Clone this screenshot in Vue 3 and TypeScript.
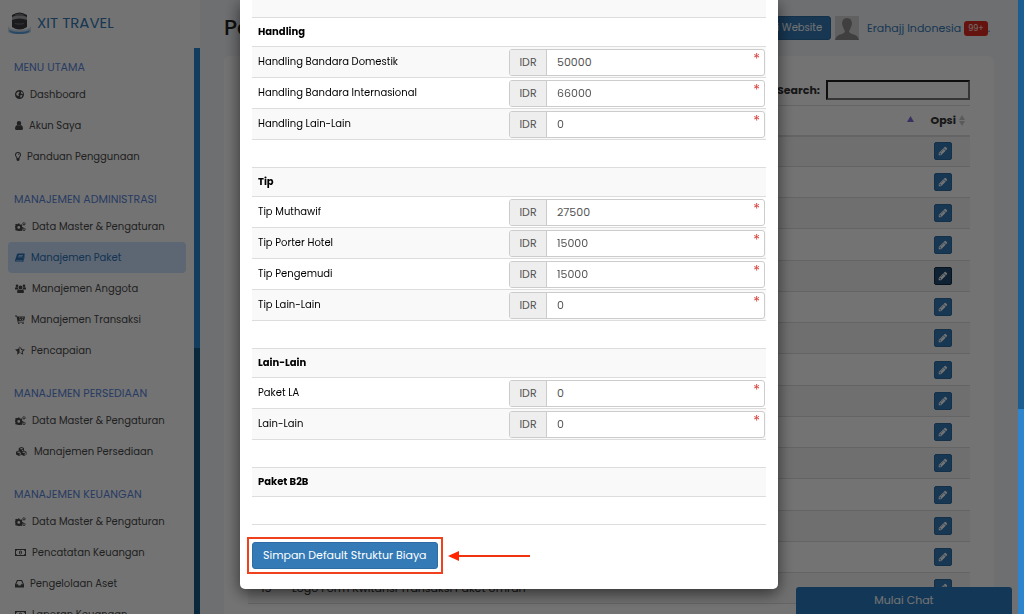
<script setup lang="ts">
import { ref } from 'vue'

interface MenuItem { icon: string; label: string; active?: boolean }
interface MenuGroup { title: string; items: MenuItem[] }
interface CostItem { id: string; label: string; value: string }
interface CostGroup { title: string; items: CostItem[] }

const menu: MenuGroup[] = [
  { title: 'MENU UTAMA', items: [
    { icon: 'globe', label: 'Dashboard' },
    { icon: 'user', label: 'Akun Saya' },
    { icon: 'bulb', label: 'Panduan Penggunaan' },
  ] },
  { title: 'MANAJEMEN ADMINISTRASI', items: [
    { icon: 'cogs', label: 'Data Master & Pengaturan' },
    { icon: 'book', label: 'Manajemen Paket', active: true },
    { icon: 'users', label: 'Manajemen Anggota' },
    { icon: 'cart', label: 'Manajemen Transaksi' },
    { icon: 'star', label: 'Pencapaian' },
  ] },
  { title: 'MANAJEMEN PERSEDIAAN', items: [
    { icon: 'cogs', label: 'Data Master & Pengaturan' },
    { icon: 'cubes', label: 'Manajemen Persediaan' },
  ] },
  { title: 'MANAJEMEN KEUANGAN', items: [
    { icon: 'cogs', label: 'Data Master & Pengaturan' },
    { icon: 'money', label: 'Pencatatan Keuangan' },
    { icon: 'inbox', label: 'Pengelolaan Aset' },
    { icon: 'money', label: 'Laporan Keuangan' },
  ] },
]

const icons: Record<string, { w: number; d: string }> = {
  globe: { w: 9, d: 'M9 0a9 9 0 1 0 0 18A9 9 0 0 0 9 0zM3 6l4-3 2 1-1 3-2 1 2 2-1 2-3-1-1.500-2zM12 3l2.500 1.500 1.500 3-1.500 1-2.500-2zM11 10l4 .5-2 4-2.500.500z' },
  user: { w: 8, d: 'M8 0a4.500 4.500 0 0 1 0 9A4.500 4.500 0 0 1 8 0zM4 8q4 3 8 0 4 1 4 7 0 3-3 3H3q-3 0-3-3 0-6 4-7z' },
  bulb: { w: 6, d: 'M6 0a6 6 0 0 1 6 6c0 3-3 4-3 7v3l-2 2H5l-2-2v-3C3 10 0 9 0 6a6 6 0 0 1 6-6zM6 2a4 4 0 0 0-4 4c0 2 2 3 3 6h2c1-3 3-4 3-6a4 4 0 0 0-4-4zM6 3.500q2.500 0 2.500 2.500h-1Q7.500 4.500 6 4.500z' },
  cogs: { w: 11, d: 'M6 3h3l.5 2 1.500.7 1.800-1 2 2-1 1.800.7 1.500 2 .5v2l-2 .5-.7 1.500 1 1.800-2 2-1.800-1-1.500.7-.5 2H6l-.5-2L4 16.300l-1.800 1-2-2 1-1.800L.5 12l-.5-2 .5-2 .7-.5-1-1.800 2-2 1.800 1L5.500 4zM7.500 8a2.800 2.800 0 1 0 0 5.600 2.800 2.800 0 0 0 0-5.600zM18 0l1 1.500 2 .3V4l-1 2-2 1-2-1-1-1.500V2l1.500-.5zM18 2.200a1.500 1.500 0 1 0 0 3 1.500 1.500 0 0 0 0-3zM18 11l1 1.500 2 .3V15l-1 2-2 1-2-1-1-1.500V13l1.500-.5zM18 13.200a1.500 1.500 0 1 0 0 3 1.500 1.500 0 0 0 0-3z' },
  book: { w: 10, d: 'M6 1h12q2 0 1.500 2l-3 10q-.5 2-2 2H3q-1.500 0-1.500 1T3 17h12l3-10h1.500l-3 10.500Q16 18 15 18H3q-3 0-3-3L4 2.500Q4.500 1 6 1zM7.500 4L7 5.500h8.500L16 4zM6.500 7L6 8.500h8.500L15 7z' },
  users: { w: 11, d: 'M11 3a4 4 0 1 1 0 8 4 4 0 0 1 0-8zM4 1a2.700 2.700 0 1 1 0 5.400A2.700 2.700 0 0 1 4 1zM18 1a2.700 2.700 0 1 1 0 5.400A2.700 2.700 0 0 1 18 1zM0 11V7.500l2-1 4 .5q0 3 1 4zM22 11V7.500l-2-1-4 .5q0 3-1 4zM8 11q3 2 6 0l3 1 1 4q0 2-2 2H6q-2 0-2-2l1-4z' },
  cart: { w: 10, d: 'M0 1h4l.5 2H20l-1.500 8L6.500 12l.5 1.500h11V15H5.500L3 3H0zM8 5v1.500h3V5zM13 5v1.500h4V5zM9 8v1.500h3V8zM14 8v1.500h2V8zM7.500 15.500a1.500 1.500 0 1 1 0 3 1.500 1.500 0 0 1 0-3zM16 15.500a1.500 1.500 0 1 1 0 3 1.500 1.500 0 0 1 0-3z' },
  star: { w: 10, d: 'M9 0v14l-5 3.500 1-6L0 7l6.500-1zM11 1l3 5.500 6 .5-4.500 4.500 1 6L11 14.500v-2l3.500 2-1-4L16 8.500l-3.500-.5L11 5z' },
  cubes: { w: 13, d: 'M13 0l5 2v5l5 2.500V15l-5 3-5-2.500L8 18l-6-3V9.500L7.500 7V2zM13 2L9.500 3.500 13 5l3.500-1.500zM8 9l-4 1.500L8 12l4-1.500zM18 9l-4 1.500 4 1.500 4-1.500zM9 13.500V16l3-1.500V12zM19 13.500V16l3-1.500V12zM14 6.500V8.500l2.500-1.200V5.300z' },
  money: { w: 11, d: 'M0 2h22v14H0zM2 6v6q2 0 2 2h14q0-2 2-2V6q-2 0-2-2H4q0 2-2 2zM11 5q3 0 3 4t-3 4-3-4 3-4zM10 7v1h.5v2.500H10v1h2.500v-1H12V7z' },
  inbox: { w: 9, d: 'M4 2h10l4 9v6H0v-6zM5.500 4L2.500 10.500H6L7 13h4l1-2.500h3.500L12.500 4z' },
}

const groups = ref<CostGroup[]>([
  { title: 'Handling', items: [
    { id: 'handling-domestik', label: 'Handling Bandara Domestik', value: '50000' },
    { id: 'handling-internasional', label: 'Handling Bandara Internasional', value: '66000' },
    { id: 'handling-lain', label: 'Handling Lain-Lain', value: '0' },
  ] },
  { title: 'Tip', items: [
    { id: 'tip-muthawif', label: 'Tip Muthawif', value: '27500' },
    { id: 'tip-porter', label: 'Tip Porter Hotel', value: '15000' },
    { id: 'tip-pengemudi', label: 'Tip Pengemudi', value: '15000' },
    { id: 'tip-lain', label: 'Tip Lain-Lain', value: '0' },
  ] },
  { title: 'Lain-Lain', items: [
    { id: 'paket-la', label: 'Paket LA', value: '0' },
    { id: 'lain-lain', label: 'Lain-Lain', value: '0' },
  ] },
  { title: 'Paket B2B', items: [] },
])

const rows = Array.from({ length: 16 }, (_, i) => ({
  no: i + 1,
  name: i === 14 ? 'Logo Form Kwitansi Transaksi Paket Umrah' : '',
}))
const search = ref('')
</script>

<template>
  <div class="page">
    <aside class="sidebar">
      <a class="brand" href="#">
        <svg width="23" height="22" viewBox="0 0 23 22" aria-hidden="true">
          <path d="M0 14q1 4 11.500 4T23 14v6q-2 2-11.500 2T0 20z" fill="#c9dcf0" />
          <path d="M1 18q4 2 10.500 2T22 18l-1 2q-3 2-9.500 2T2 20z" fill="#5aa3e0" />
          <path d="M4 3q7.500-5 15 0v12q-7.500 5-15 0z" fill="#3c3c42" />
          <path d="M4 5q7.500-4 15 0v3q-7.500-3-15 0z" fill="#a9a9ae" />
          <path d="M6 3q5.500-3 11 0-5.500 2-11 0z" fill="#77777c" />
          <path d="M7 11q4.500 1 9 0v1q-4.500 1-9 0z" fill="#77777c" />
        </svg>
        <span>XIT TRAVEL</span>
      </a>
      <div class="menu-area">
        <nav class="menu">
          <section v-for="group in menu" :key="group.title" class="menu-group">
            <h2>{{ group.title }}</h2>
            <a v-for="item in group.items" :key="item.label" href="#" class="menu-item" :class="{ active: item.active }">
              <svg :width="icons[item.icon].w" height="9" :viewBox="`0 0 ${icons[item.icon].w * 2} 18`" aria-hidden="true">
                <path :d="icons[item.icon].d" fill="currentColor" fill-rule="evenodd" />
              </svg>
              <span>{{ item.label }}</span>
            </a>
          </section>
        </nav>
        <div class="side-scroll"><div class="side-thumb"></div></div>
      </div>
    </aside>

    <main class="main">
      <header class="topbar">
        <h1>Pe</h1>
        <div class="account">
          <button type="button" class="site-btn">Kunjungi Website</button>
          <svg class="avatar" width="24" height="24" viewBox="0 0 24 24" aria-hidden="true">
            <rect width="24" height="24" fill="#d6d6d6" />
            <path d="M12 2q5 0 5 6l-1 3q-1 3-2 4 0 2 3 3 6 1 7 6H0q1-5 7-6 3-1 3-3-1-1-2-4L7 8q0-6 5-6z" fill="#8c8c8c" />
          </svg>
          <a href="#" class="name">Erahajj Indonesia</a>
          <span class="badge">99+</span><span class="dot">.</span>
        </div>
      </header>
      <section class="card">
        <div class="search">
          <label for="search">Search:</label>
          <input id="search" v-model="search" type="text">
        </div>
        <table class="list">
          <thead>
            <tr>
              <th class="no"></th>
              <th class="sorted"><svg width="7" height="6" viewBox="0 0 7 6" aria-hidden="true"><path d="M3.500 0L7 6H0z" fill="#7a70d8" /></svg></th>
              <th class="opt">
                <div class="sortable">
                  Opsi
                  <svg width="6" height="11" viewBox="0 0 6 11" aria-hidden="true"><path d="M3 0l3 5H0zM3 11L0 6h6z" fill="#c8c8c8" /></svg>
                </div>
              </th>
            </tr>
          </thead>
          <tbody>
            <tr v-for="row in rows" :key="row.no">
              <td class="no">{{ row.no === 15 ? row.no : '' }}</td>
              <td>{{ row.name }}</td>
              <td class="opt">
                <button type="button" class="edit" :class="{ pressed: row.no === 5 }" aria-label="Edit">
                  <svg width="10" height="10" viewBox="0 0 1792 1792" aria-hidden="true">
                    <path d="M491 1536l91-91-235-235-91 91v107h128v128h107zm523-928q0-22-22-22-10 0-17 7l-542 542q-7 7-7 17 0 22 22 22 10 0 17-7l542-542q7-7 7-17zm-54-192l416 416-832 832h-416v-416zm683 96q0 53-37 90l-166 166-416-416 166-165q36-38 90-38 53 0 91 38l235 234q37 39 37 91z" fill="currentColor" />
                  </svg>
                </button>
              </td>
            </tr>
          </tbody>
        </table>
      </section>
    </main>

    <button type="button" class="chat">Mulai Chat</button>
    <div class="backdrop"></div>
    <div class="page-scroll"><div class="page-thumb"></div></div>

    <div class="modal" role="dialog" aria-label="Struktur Biaya">
      <table class="costs">
        <tbody>
          <tr class="lead"><td colspan="2"></td></tr>
          <template v-for="group in groups" :key="group.title">
            <tr class="heading"><th colspan="2">{{ group.title }}</th></tr>
            <tr v-for="item in group.items" :key="item.id" class="entry">
              <td><label :for="item.id">{{ item.label }}</label></td>
              <td class="field">
                <div class="money">
                  <span class="unit">IDR</span>
                  <input :id="item.id" v-model="item.value" type="text">
                  <span class="star">*</span>
                </div>
              </td>
            </tr>
            <tr class="spacer"><td colspan="2"></td></tr>
          </template>
        </tbody>
      </table>
      <div class="save">
        <button type="button" class="save-btn">Simpan Default Struktur Biaya</button>
        <div class="frame"></div>
        <svg class="arrow" width="82" height="12" viewBox="0 0 82 12" aria-hidden="true">
          <path d="M8 6H82" stroke="#f0320e" stroke-width="2" />
          <path d="M0 6L11 1V11z" fill="#ff2600" />
        </svg>
      </div>
    </div>
  </div>
</template>

<style>
body { margin: 0; overflow: hidden; }
</style>

<style scoped>
* { box-sizing: border-box; }
.page {
  display: flex;
  height: 100vh;
  overflow: hidden;
  background: #f4f6fb;
  color: #333;
  font-family: Poppins, Inter, "Open Sans", sans-serif;
  font-size: 11px;
  line-height: 16px;
}
button, input { font-family: inherit; }
a { text-decoration: none; }

.sidebar { display: flex; flex-direction: column; flex: 0 0 200px; background: #fff; }
.brand { display: flex; align-items: center; gap: 6px; flex: 0 0 48px; padding: 0 8px 3px; color: #337ab7; font-size: 15px; }
.menu-area { display: flex; flex: 1; min-height: 0; }
.menu { flex: 1; overflow: hidden; padding: 8px 0 0 8px; }
.menu-group { margin-bottom: 16px; }
.menu h2 { margin: 0; padding-left: 6px; font-size: 11px; font-weight: 400; line-height: 23px; color: #5a86dc; }
.menu-item { display: flex; align-items: center; gap: 6px; height: 31px; padding-left: 7px; border-radius: 4px; color: #4a4a4a; font-size: 10px; white-space: nowrap; }
.menu-item.active { background: #cfe2ff; color: #2a75b8; }
.side-scroll { flex: 0 0 6px; margin-left: 8px; background: #175a86; }
.side-thumb { height: 53%; background: #2b87d1; }

.main { flex: 1; min-width: 0; padding: 0 30px 0 24px; }
.topbar { display: flex; align-items: center; justify-content: space-between; height: 56px; }
.topbar h1 { margin: 0; font-size: 22px; font-weight: 500; color: #222; }
.account { display: flex; align-items: center; margin-right: 4px; }
.site-btn { height: 24px; padding: 0 8px; border: 1px solid #2e6da4; border-radius: 3px; background: #337ab7; color: #fff; font-size: 10px; }
.avatar { margin: 0 8px 0 4px; }
.name { color: #337ab7; font-size: 11px; }
.badge { margin-left: 3px; padding: 0 4px; border-radius: 3px; background: #e02b20; color: #fff; font-size: 8px; line-height: 15px; }
.dot { color: #337ab7; }
.card { padding: 24px 24px 0; border-radius: 6px; background: #fff; }
.search { display: flex; align-items: center; justify-content: flex-end; gap: 6px; margin-bottom: 5px; }
.search label { font-weight: 700; }
.search input { width: 144px; height: 20px; border: 2px inset #767676; background: #fff; }
.list { width: 100%; border-collapse: collapse; table-layout: fixed; }
.list th { height: 30px; padding: 0; border-top: 1px solid #ddd; border-bottom: 2px solid #ddd; }
.list td { height: 31px; padding: 0; border-bottom: 1px solid #ddd; }
.list tr:nth-child(4n) td { height: 32px; }
.list tbody tr:nth-child(odd) { background: #f7f7f7; }
.list .no { width: 44px; padding-left: 13px; }
.list .sorted { text-align: right; vertical-align: middle; padding: 0 2px 4px 0; }
.list .opt { width: 54px; text-align: center; }
.sortable { display: flex; align-items: center; justify-content: flex-end; gap: 3px; padding-right: 5px; }
.edit { display: inline-flex; align-items: center; justify-content: center; width: 18px; height: 18px; padding: 0; border: 1px solid #2e6da4; border-radius: 2px; background: #337ab7; color: #fff; vertical-align: middle; }
.edit.pressed { background: #204d74; border-color: #122b40; }

.chat { position: fixed; right: 12px; bottom: 0; width: 216px; height: 27px; border: 0; border-radius: 3px 3px 0 0; background: #2a7cc0; color: #fff; font-size: 11px; }
.backdrop { position: fixed; inset: 0; background: rgba(0, 0, 0, 0.55); }
.page-scroll { position: fixed; top: 0; right: 0; bottom: 0; width: 6px; background: #2d86cd; }
.page-thumb { height: 409px; background: #1a5d90; }

.modal {
  position: fixed;
  top: 0;
  left: 240px;
  right: 246px;
  padding: 0 12px 20px;
  border-radius: 0 0 5px 5px;
  background: #fff;
  box-shadow: 0 4px 16px rgba(0, 0, 0, 0.6);
  color: #000;
  font-size: 10px;
}
.costs { width: 100%; border-collapse: separate; border-spacing: 0; table-layout: fixed; }
.costs td, .costs th { padding: 0 1px 0 6px; border-top: 1px solid #ddd; text-align: left; }
.costs tr:nth-child(odd) { background: #f9f9f9; }
.costs .lead td { height: 17px; border-top: 0; }
.costs .heading th { height: 29px; font-weight: 700; }
.costs .entry td { height: 31px; }
.costs .spacer td { height: 28px; }
.costs tbody tr:last-child td { border-bottom: 1px solid #ddd; height: 29px; }
.costs .field { padding-left: 0; }
.money { display: flex; position: relative; height: 27px; border: 1px solid #ccc; border-radius: 3px; background: #fff; color: #555; font-size: 11px; }
.unit { display: flex; align-items: center; justify-content: center; flex: 0 0 37px; border-right: 1px solid #ccc; border-radius: 2px 0 0 2px; background: #eee; }
.money input { flex: 1; min-width: 0; padding: 0 10px; border: 0; border-radius: 3px; background: transparent; color: #555; font-size: 11px; }
.star { position: absolute; top: 1px; right: 4px; color: #d9403c; font-size: 14px; }
.save { position: relative; width: max-content; margin-top: 17px; }
.save-btn { display: block; height: 27px; padding: 0 10px; border: 1px solid #2e6da4; border-radius: 3px; background: #337ab7; color: #fff; font-size: 11px; white-space: nowrap; }
.frame { position: absolute; inset: -5px; border: 2px solid #f0401c; }
.arrow { position: absolute; top: 8px; left: calc(100% + 10px); }
</style>
